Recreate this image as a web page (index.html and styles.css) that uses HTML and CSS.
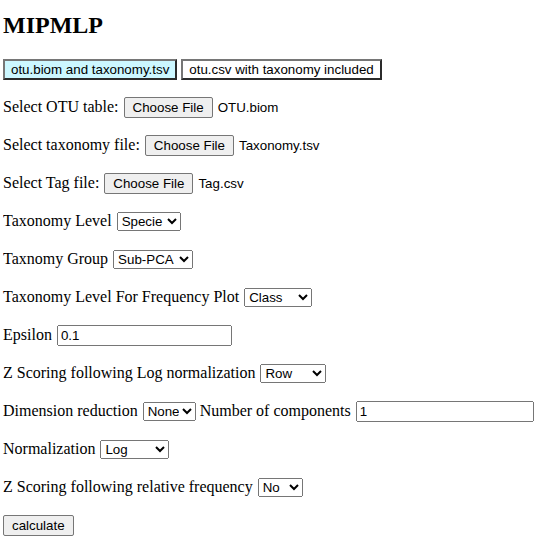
FILE: index.html
```html
<!DOCTYPE html>
<html>
<head>
<meta charset="utf-8">
<title>MIPMLP</title>
<link rel="stylesheet" href="styles.css">
</head>
<body>
<h1 class="title">MIPMLP</h1>
<div class="modes">
  <button class="mode mode-active">otu.biom and taxonomy.tsv</button>
  <button class="mode">otu.csv with taxonomy included</button>
</div>
<div class="row">Select OTU table: <button class="file-btn">Choose File</button><span class="file-name">OTU.biom</span></div>
<div class="row">Select taxonomy file: <button class="file-btn">Choose File</button><span class="file-name">Taxonomy.tsv</span></div>
<div class="row">Select Tag file: <button class="file-btn">Choose File</button><span class="file-name">Tag.csv</span></div>
<div class="row">Taxonomy Level <select class="sel w-specie"><option>Specie</option></select></div>
<div class="row">Taxnomy Group <select class="sel w-subpca"><option>Sub-PCA</option></select></div>
<div class="row">Taxonomy Level For Frequency Plot <select class="sel w-class"><option>Class</option></select></div>
<div class="row">Epsilon <input class="txt w-eps" type="text" value="0.1"></div>
<div class="row">Z Scoring following Log normalization <select class="sel w-row"><option>Row</option></select></div>
<div class="row">Dimension reduction <select class="sel w-none"><option>None</option></select> Number of components <input class="txt w-comp" type="text" value="1"></div>
<div class="row">Normalization <select class="sel w-log"><option>Log</option></select></div>
<div class="row">Z Scoring following relative frequency <select class="sel w-no"><option>No</option></select></div>
<div class="row"><button class="calc">calculate</button></div>
</body>
</html>
```
FILE: styles.css
```css
html { background: #fff; }
body {
  margin: 0 3px;
  padding-top: 11px;
  font-family: "Liberation Serif", "Times New Roman", serif;
  font-size: 16px;
  color: #000;
}
.title {
  font-size: 24px;
  line-height: 28px;
  margin: 0 0 20px 0;
}
.modes {
  display: flex;
  gap: 4px;
  height: 21px;
}
.mode {
  font-family: "Liberation Sans", Arial, sans-serif;
  font-size: 13.33px;
  background: #fff;
  border: 2px solid;
  border-color: #767676 #2b2b2b #2b2b2b #767676;
  padding: 0 6px;
  color: #000;
  height: 21px;
}
.mode-active { background: #ccf7ff; }
.row {
  display: flex;
  align-items: center;
  white-space: pre;
  height: 22px;
  margin-top: 16px;
}
.file-btn, .calc {
  font-family: "Liberation Sans", Arial, sans-serif;
  font-size: 13.33px;
  background: #efefef;
  border: 1px solid #767676;
  border-radius: 2px;
  padding: 0 8px;
  height: 21px;
  color: #000;
}
.file-btn { margin-left: 1px; margin-right: 5px; }
.file-name {
  font-family: "Liberation Sans", Arial, sans-serif;
  font-size: 13.33px;
}
.sel {
  font-family: "Liberation Sans", Arial, sans-serif;
  font-size: 13.33px;
  height: 19px;
  box-sizing: border-box;
  margin-left: 1px;
}
.txt {
  font-family: "Liberation Sans", Arial, sans-serif;
  font-size: 13.33px;
  height: 21px;
  box-sizing: border-box;
  margin-left: 1px;
}
.w-specie { width: 64px; }
.w-subpca { width: 80px; }
.w-class { width: 68px; }
.w-row { width: 66px; }
.w-none { width: 53px; }
.w-log { width: 69px; }
.w-no { width: 45px; }
.w-eps { width: 175px; }
.w-comp { width: 189px; flex: 0 1 189px; min-width: 0; margin-right: 5px; }
```
